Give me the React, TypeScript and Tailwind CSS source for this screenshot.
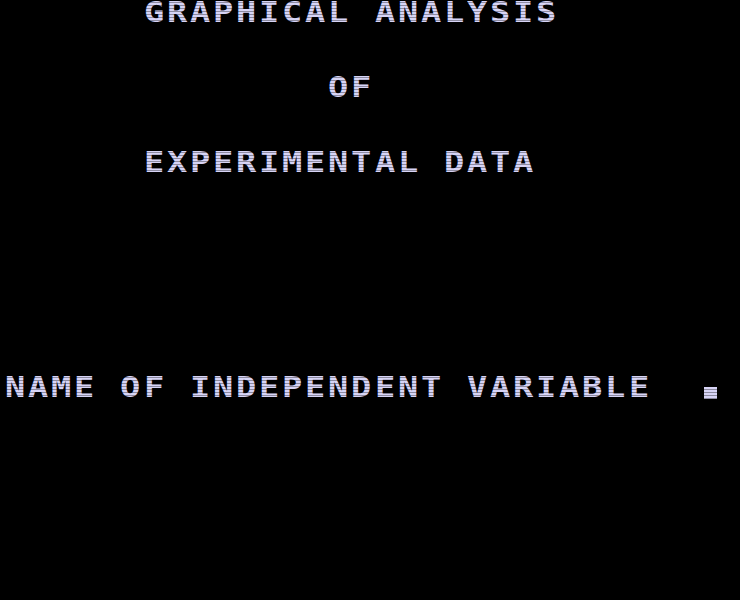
// Title screen of the graphing program, laid out on a 24-row text grid
const rows: { row: number; text: string; cursor?: boolean }[] = [
  { row: 0, text: "      GRAPHICAL ANALYSIS" },
  { row: 3, text: "              OF" },
  { row: 6, text: "      EXPERIMENTAL DATA" },
  { row: 15, text: "NAME OF INDEPENDENT VARIABLE  ", cursor: true },
]

// one fixed-width character cell, glyph stretched a little to look blocky
const Cell = ({ ch }: { ch: string }) => (
  <span className="inline-block w-[23.1px] shrink-0 text-left">
    <span className="inline-block origin-left scale-x-[1.2]">{ch === " " ? "\u00a0" : ch}</span>
  </span>
)

const TextLine = ({ text, cursor }: { text: string; cursor?: boolean }) => {
  return (
    <div className="flex items-start h-[25px] text-[28px] leading-[25px] font-bold">
      {text.split("").map((ch, i) => (
        <Cell key={i} ch={ch} />
      ))}
      {cursor && <div className="ml-[6px] mt-[12px] w-[13px] h-[12px] bg-[#d7d4f6]" />}
    </div>
  )
}

export default function App() {
  const grid = Array.from({ length: 24 }, (_, i) => rows.find((r) => r.row === i))
  return (
    <div className="relative w-[740px] h-[600px] overflow-hidden bg-black text-[#d7d4f6] font-['DejaVu_Sans_Mono',monospace]">
      <div className="flex flex-col pl-[5px]">
        {grid.map((r, i) =>
          r ? <TextLine key={i} text={r.text} cursor={r.cursor} /> : <div key={i} className="h-[25px]" />
        )}
      </div>
      {/* crt scanlines */}
      <div className="pointer-events-none absolute inset-0 bg-[repeating-linear-gradient(to_bottom,transparent_0px,transparent_2px,rgba(0,0,0,0.35)_2px,rgba(0,0,0,0.35)_3px)]" />
    </div>
  )
}
